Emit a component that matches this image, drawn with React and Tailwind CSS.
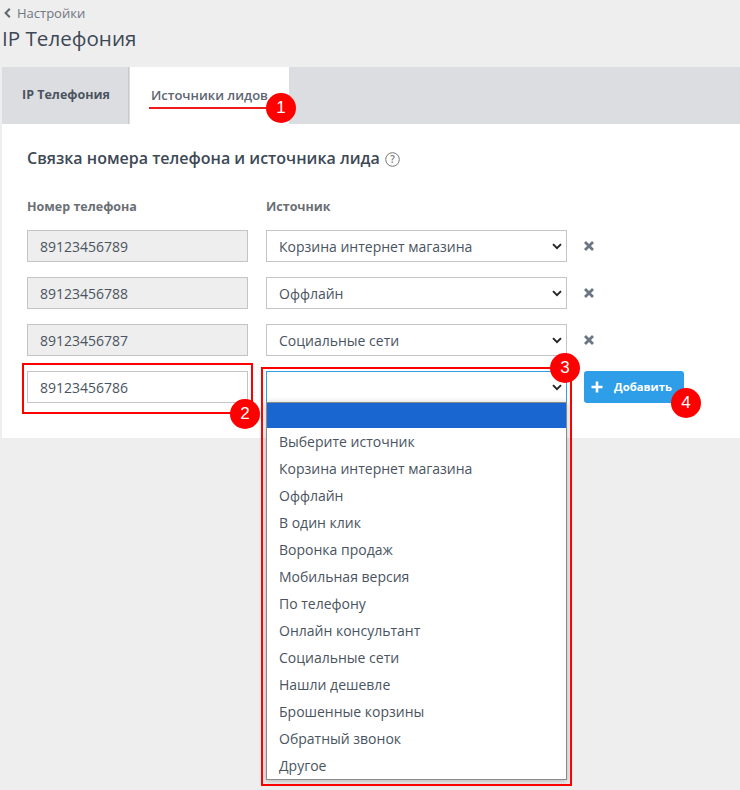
import React from "react";

const rows = [
  ["89123456789", "Корзина интернет магазина"],
  ["89123456788", "Оффлайн"],
  ["89123456787", "Социальные сети"],
];
const options = [
  "Выберите источник",
  "Корзина интернет магазина",
  "Оффлайн",
  "В один клик",
  "Воронка продаж",
  "Мобильная версия",
  "По телефону",
  "Онлайн консультант",
  "Социальные сети",
  "Нашли дешевле",
  "Брошенные корзины",
  "Обратный звонок",
  "Другое",
];

function Badge({ n, className }) {
  return (
    <div className={"absolute w-[30px] h-[30px] rounded-full bg-[#fe0000] text-white text-[17px] flex items-center justify-center font-['Liberation_Sans',sans-serif] " + className}>
      {n}
    </div>
  );
}

function Chevron() {
  return (
    <svg width="10" height="7" viewBox="0 0 10 7" className="absolute right-[4px] top-[12px]">
      <path d="M1 1.2 L5 5.2 L9 1.2" fill="none" stroke="#222" strokeWidth="1.9" />
    </svg>
  );
}

function Select({ value, focused }) {
  return (
    <div className={"relative w-[301px] h-[32px] bg-white border flex items-center pl-3 text-[14px] " + (focused ? "border-[#2f9ee9]" : "border-[#c4c4c4]")}>
      {value}
      <Chevron />
    </div>
  );
}

function Cross() {
  return (
    <svg width="10" height="10" viewBox="0 0 10 10" className="ml-[17px] -mt-px">
      <path d="M1 1 L9 9 M9 1 L1 9" stroke="#6b7682" strokeWidth="2.8" />
    </svg>
  );
}

export default function App() {
  return (
    <div className="relative w-[740px] h-[790px] overflow-hidden bg-[#eeeeee] text-[#4a5460] font-['Open_Sans',sans-serif]">
      <div className="pl-[4px] pt-[4px] h-[67px]">
        <div className="flex items-center gap-[6px] text-[13px] leading-[18px] text-[#6f7780]">
          <svg width="7" height="10" viewBox="0 0 7 10">
            <path d="M5.8 0.8 L1.6 5 L5.8 9.2" fill="none" stroke="#5f6770" strokeWidth="2" />
          </svg>
          Настройки
        </div>
        <div className="text-[20.6px] leading-[28px] mt-[2px] -ml-[2px] text-[#3d4855]">IP Телефония</div>
      </div>

      <div className="ml-[2px]">
        <div className="flex h-[57px] bg-[#dcdde0]">
          <div className="w-[127px] flex items-center pl-[20px] text-[12.5px] font-bold border-r border-[#c9cacd] text-[#4a5460]">
            IP Телефония
          </div>
          <div className="w-[159px] ml-px bg-white flex items-center pl-[21px] text-[13px] font-semibold text-[#5b6570]">
            Источники лидов
          </div>
        </div>

        <div className="bg-white h-[314px] pl-[25px] pt-[23px]">
          <div className="flex items-center text-[16px] leading-[22px] font-semibold text-[#3d4855]">
            Связка номера телефона и источника лида
            <svg width="15" height="15" viewBox="0 0 15 15" className="ml-[5px] mt-[2px]">
              <circle cx="7.5" cy="7.5" r="6.8" fill="none" stroke="#777" strokeWidth="1" />
              <text x="7.5" y="11" textAnchor="middle" fontSize="10" fill="#777">?</text>
            </svg>
          </div>

          <div className="flex mt-[29px] text-[12.5px] leading-[18px] font-bold text-[#6b6f75]">
            <div className="w-[239px]">Номер телефона</div>
            <div>Источник</div>
          </div>

          <div className="flex flex-col gap-[15px] mt-[14px]">
            {rows.map(([phone, source]) => (
              <div key={phone} className="flex items-center h-[32px]">
                <div className="w-[221px] h-[32px] bg-[#eeeeee] border border-[#c4c4c4] flex items-center pl-3 text-[14px] mr-[18px]">
                  {phone}
                </div>
                <Select value={source} />
                <Cross />
              </div>
            ))}
            <div className="flex items-center h-[32px]">
              <div className="w-[221px] h-[32px] bg-white border border-[#c4c4c4] flex items-center pl-3 text-[14px] mr-[18px]">
                89123456786
              </div>
              <Select value="" focused />
              <div className="ml-[17px] w-[100px] h-[32px] rounded-[3px] bg-[#2f9ee9] text-white flex items-center pl-[7px] text-[11.3px] font-bold">
                <svg width="12" height="12" viewBox="0 0 12 12" className="mr-[11px]">
                  <path d="M6 0.5 V11.5 M0.5 6 H11.5" stroke="#fff" strokeWidth="2.6" />
                </svg>
                Добавить
              </div>
            </div>
          </div>
        </div>
      </div>

      {/* open select list */}
      <div className="absolute left-[266px] top-[402px] w-[301px] h-[378px] bg-white border border-[#8a8a8a] shadow-[0_1px_6px_rgba(0,0,0,0.25)] text-[14px]">
        <div className="h-[25px] bg-[#1a66d0]" />
        {options.map((o) => (
          <div key={o} className="h-[27px] leading-[27px] pl-3 first:mt-px">{o}</div>
        ))}
      </div>

      {/* annotations */}
      <div className="absolute left-[149px] top-[107px] w-[125px] h-[2px] bg-[#f01c1c]" />
      <div className="absolute left-[22px] top-[363px] w-[231px] h-[51px] border-2 border-[#fe0000]" />
      <div className="absolute left-[261px] top-[367px] w-[311px] h-[419px] border-2 border-[#fe0000]" />
      <Badge n="1" className="left-[266px] top-[93px]" />
      <Badge n="2" className="left-[230px] top-[399px]" />
      <Badge n="3" className="left-[550px] top-[353px]" />
      <Badge n="4" className="left-[671px] top-[388px]" />
    </div>
  );
}
